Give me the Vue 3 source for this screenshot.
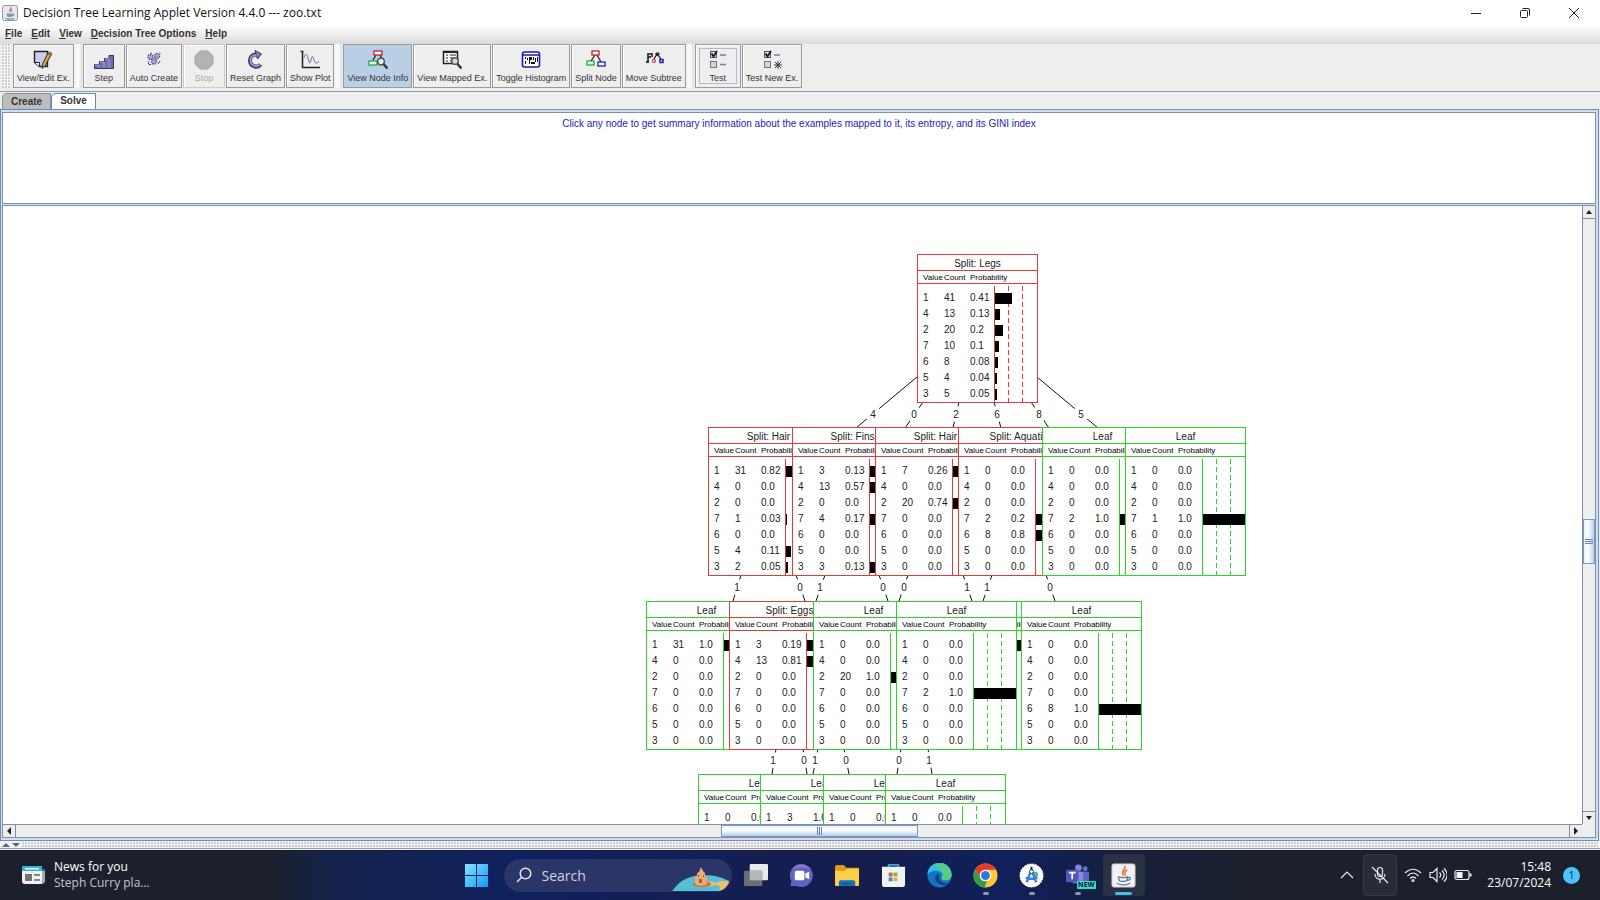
<script setup>
const menus = ['File', 'Edit', 'View', 'Decision Tree Options', 'Help']

const toolGroups = [
  [{ label: 'View/Edit Ex.', icon: 'edit' }],
  [
    { label: 'Step', icon: 'step' },
    { label: 'Auto Create', icon: 'gears' },
    { label: 'Stop', icon: 'stop', disabled: true },
    { label: 'Reset Graph', icon: 'reset' },
    { label: 'Show Plot', icon: 'plot' },
  ],
  [
    { label: 'View Node Info', icon: 'nodeinfo', active: true },
    { label: 'View Mapped Ex.', icon: 'mapped' },
    { label: 'Toggle Histogram', icon: 'histogram' },
    { label: 'Split Node', icon: 'split' },
    { label: 'Move Subtree', icon: 'move' },
  ],
  [
    { label: 'Test', icon: 'test', focused: true },
    { label: 'Test New Ex.', icon: 'testnew' },
  ],
]

const classes = [1, 4, 2, 7, 6, 5, 3]
const none = ['0', '0.0']

function node(x, y, title, filled) {
  return {
    x,
    y,
    title,
    leaf: title === 'Leaf',
    rows: classes.map((value) => {
      const [count, probability] = filled[value] || none
      return { value, count, probability, bar: Number(probability) * 100 }
    }),
  }
}

const nodes = [
  node(914, 48, 'Split: Legs', {
    1: ['41', '0.41'], 4: ['13', '0.13'], 2: ['20', '0.2'], 7: ['10', '0.1'],
    6: ['8', '0.08'], 5: ['4', '0.04'], 3: ['5', '0.05'],
  }),
  node(705, 221, 'Split: Hair', {
    1: ['31', '0.82'], 7: ['1', '0.03'], 5: ['4', '0.11'], 3: ['2', '0.05'],
  }),
  node(789, 221, 'Split: Fins', {
    1: ['3', '0.13'], 4: ['13', '0.57'], 7: ['4', '0.17'], 3: ['3', '0.13'],
  }),
  node(872, 221, 'Split: Hair', { 1: ['7', '0.26'], 2: ['20', '0.74'] }),
  node(955, 221, 'Split: Aquatic', { 7: ['2', '0.2'], 6: ['8', '0.8'] }),
  node(1039, 221, 'Leaf', { 7: ['2', '1.0'] }),
  node(1122, 221, 'Leaf', { 7: ['1', '1.0'] }),
  node(935, 395, 'Leaf', { 1: ['7', '1.0'] }),
  node(643, 395, 'Leaf', { 1: ['31', '1.0'] }),
  node(726, 395, 'Split: Eggs', { 1: ['3', '0.19'], 4: ['13', '0.81'] }),
  node(810, 395, 'Leaf', { 2: ['20', '1.0'] }),
  node(893, 395, 'Leaf', { 7: ['2', '1.0'] }),
  node(1018, 395, 'Leaf', { 6: ['8', '1.0'] }),
  node(695, 568, 'Leaf', { 4: ['13', '1.0'] }),
  node(757, 568, 'Leaf', { 1: ['3', '1.0'] }),
  node(820, 568, 'Leaf', {}),
  node(882, 568, 'Leaf', {}),
]

const edges = [
  [914, 171, 853, 222, 870, '4'],
  [920, 196, 902, 222, 911, '0'],
  [956, 196, 950, 222, 953, '2'],
  [991, 196, 998, 222, 994, '6'],
  [1028, 196, 1046, 222, 1036, '8'],
  [1034, 171, 1095, 222, 1078, '5'],
  [738, 369, 730, 395, 734, '1'],
  [793, 369, 802, 395, 797, '0'],
  [822, 369, 813, 395, 817, '1'],
  [876, 369, 885, 395, 880, '0'],
  [905, 369, 896, 395, 901, '0'],
  [960, 369, 969, 395, 964, '1'],
  [989, 369, 980, 395, 984, '1'],
  [1043, 369, 1052, 395, 1047, '0'],
  [773, 543, 769, 568, 770, '1'],
  [800, 543, 804, 568, 801, '0'],
  [815, 543, 810, 568, 812, '1'],
  [841, 543, 846, 568, 843, '0'],
  [898, 543, 894, 568, 896, '0'],
  [925, 543, 929, 568, 926, '1'],
].map(([x1, y1, x2, y2, lx, label]) => ({
  x1, y1, x2, y2, lx, label,
  ly: y2 - 14,
}))

const apps = [
  { name: 'Task view', icon: 'taskview' },
  { name: 'Chat', icon: 'chat' },
  { name: 'File Explorer', icon: 'explorer' },
  { name: 'Microsoft Store', icon: 'store' },
  { name: 'Edge', icon: 'edge' },
  { name: 'Chrome', icon: 'chrome', open: true },
  { name: 'Android Studio', icon: 'studio', open: true },
  { name: 'Teams', icon: 'teams', open: true },
  { name: 'Java', icon: 'java', current: true },
]
</script>

<template>
  <div class="desktop">
    <header class="titlebar">
      <svg class="java-mini" viewBox="0 0 16 16" aria-hidden="true">
        <rect x=".5" y=".5" width="15" height="15" rx="2" fill="#e3ebf1" stroke="#8b9aa8" />
        <path d="M8.500 2c2 1.600-2.500 2.500-.5 5M10 4c-1.500 1-.8 1.800-.5 3" fill="none" stroke="#d8803e" stroke-width="1.300" />
        <path d="M4.500 8.500h6c0 3-1 3.500-3 3.500s-3-.5-3-3.500z" fill="#7d9bb2" />
        <path d="M10.500 9c2-.3 2 1.700-.5 2M3.500 13.500c2 .8 7 .8 9 0" fill="none" stroke="#55788f" />
      </svg>
      <h1>Decision Tree Learning Applet Version 4.4.0 --- zoo.txt</h1>
      <div class="window-buttons">
        <button aria-label="Minimize"><svg viewBox="0 0 12 12"><path d="M1 6.500h10" /></svg></button>
        <button aria-label="Restore">
          <svg viewBox="0 0 12 12"><rect x="1.500" y="3.500" width="7" height="7" rx="1" /><path d="M3.500 1.500H9a1.500 1.500 0 0 1 1.500 1.500v5.500" /></svg>
        </button>
        <button aria-label="Close"><svg viewBox="0 0 12 12"><path d="M1 1l10 10M11 1L1 11" /></svg></button>
      </div>
    </header>

    <nav class="menubar">
      <button v-for="m in menus" :key="m"><u>{{ m[0] }}</u>{{ m.slice(1) }}</button>
    </nav>

    <div class="toolbar">
      <span class="grip"></span>
      <div v-for="(group, g) in toolGroups" :key="g" class="tool-group">
        <button
          v-for="t in group"
          :key="t.label"
          class="tool"
          :class="{ active: t.active, focused: t.focused }"
          :disabled="t.disabled"
        >
          <svg viewBox="0 0 20 20" aria-hidden="true">
            <g v-if="t.icon === 'edit'">
              <path d="M1.500 1.500h13v15h-8l-5-4z" fill="#c9cdf0" stroke="#222" stroke-width="1.400" />
              <path d="M1.500 12.500h5v4" fill="#fff" stroke="#222" />
              <path d="M15 3l3 2-6 11-3 2.500.5-4.500z" fill="#d8a450" stroke="#3a2b18" />
              <path d="M15 3.500l3 2 1-2-2.500-1.700z" fill="#d07b70" stroke="#3a2b18" stroke-width=".6" />
            </g>
            <g v-else-if="t.icon === 'step'">
              <path d="M.5 18.500v-4h5v-3h5v-3h4.500v-3h4.500v13z" fill="#7070b0" stroke="#34345c" />
              <path d="M1 15h4v3M6 12h4v6M11 9h4v9" fill="none" stroke="#a4a4d8" />
            </g>
            <g v-else-if="t.icon === 'gears'" fill="#a8a8e4" stroke="#42426c">
              <circle cx="6.500" cy="7" r="2.500" stroke-dasharray="1.200 1" stroke-width="1.500" />
              <circle cx="13" cy="6" r="2.500" stroke-dasharray="1.200 1" stroke-width="1.500" />
              <circle cx="10" cy="11.500" r="2.500" stroke-dasharray="1.200 1" stroke-width="1.500" />
              <path d="M4 11.500l1 3h2M14 14l2-3M8 3L6 4M15.500 2.500l1 1" fill="none" />
            </g>
            <path v-else-if="t.icon === 'stop'" d="M6 1h8l5 5v8l-5 5H6l-5-5V6z" fill="#b2b2b2" stroke="#a4a4a4" />
            <g v-else-if="t.icon === 'reset'" fill="none">
              <path d="M15.500 14.500c-1.500 2-3.500 2.500-5.500 2-3-.8-5-3-5-6s2-6 6-6" stroke="#34345c" stroke-width="4" />
              <path d="M10 .5l6.500 3.500L12.500 9z" fill="#8080c0" stroke="#34345c" />
              <path d="M15 14.500c-1.500 1.500-3 2-5 1.500-2.700-.7-4.500-2.700-4.500-5.500 0-3 2-5.500 6-5.500" stroke="#9898d0" stroke-width="2" />
            </g>
            <g v-else-if="t.icon === 'plot'" fill="none">
              <path d="M2.500 1v16.500H20M.5 1.500h3" stroke="#222" stroke-width="1.500" />
              <path d="M4 8c1-5 3-5 4 0s2 7 3 2 2-4 3 0 2 4 5 1" stroke="#6868a0" />
            </g>
            <g v-else-if="t.icon === 'nodeinfo'" fill="none" stroke-width="1.300">
              <path d="M8 5L5 10M12 5l2 4" stroke="#222" />
              <rect x="6" y="1" width="8" height="4" fill="#fff" stroke="#c02030" />
              <rect x="1" y="11" width="8" height="4" fill="#fff" stroke="#18b030" />
              <circle cx="13" cy="11.500" r="3.300" fill="#e5e8ef" stroke="#444" />
              <path d="M15.500 14l4 4.500" stroke="#3c3428" stroke-width="2.500" />
            </g>
            <g v-else-if="t.icon === 'mapped'" fill="none" stroke="#222" stroke-width="1.500">
              <rect x="1.500" y="1.500" width="14" height="12" fill="#fff" />
              <path d="M1 2h15" stroke-width="2" />
              <path d="M4 5h2M8 5h6M4 8h2M8 8h4M4 11h2M8 11h2" stroke-width="1.200" />
              <circle cx="13" cy="11" r="3.300" fill="#d9d9e0" stroke="#555" />
              <path d="M15.500 14l4 4.500" stroke="#3c3428" stroke-width="2.500" />
            </g>
            <g v-else-if="t.icon === 'histogram'">
              <rect x="1.500" y="2" width="17" height="15" rx="2" fill="#fff" stroke="#1a1ab0" stroke-width="1.600" />
              <path d="M2 5h16" stroke="#1a1ab0" stroke-width="1.500" />
              <path d="M4 7h1v2H4zM4 11h1v3H4zM6 8h1v2H6zM8 7v7h1V7zM9 7h2v3H9zM12 7h1v3h-1zM10 12h4v2h-4zM14 8h1v4h-1zM16 7h1v5h-1z" fill="#111" />
            </g>
            <g v-else-if="t.icon === 'split'" fill="#fff" stroke-width="1.300">
              <path d="M9 5l-4 6M11 5l4 7" stroke="#222" />
              <rect x="6" y="1" width="7" height="4" stroke="#c02030" />
              <rect x="1" y="11" width="7" height="4" stroke="#18b030" />
              <rect x="12" y="12" width="7" height="4" stroke="#2020b0" />
            </g>
            <g v-else-if="t.icon === 'move'" fill="none" stroke="#111" stroke-width="1.500">
              <path d="M4 3v9M2 12h3M5 4h2M4 7h3M8 3v4" />
              <path d="M10 9l3-5 4 5" stroke-width="1.200" />
              <path d="M12 3h3v2h-3z" stroke-width="1" />
              <circle cx="10" cy="11" r="1.500" stroke="#e03030" stroke-width="1.200" />
              <path d="M16 9.500h3v3h-3z" stroke="#2020b0" />
            </g>
            <g v-else fill="none">
              <rect x="2.500" y="1.500" width="6" height="6" fill="#ddd" stroke="#555" />
              <path d="M3.500 3.500l2 3L9 1" stroke="#111" stroke-width="1.700" />
              <rect x="2.500" y="11.500" width="6" height="6" fill="#d5d5d5" stroke="#777" />
              <path d="M12 5h6" stroke="#7777a8" stroke-width="1.500" />
              <path v-if="t.icon === 'test'" d="M12 14.500h6" stroke="#7777a8" stroke-width="1.500" />
              <path v-else d="M16 11v8M12 15h8M13 12l6 6M19 12l-6 6" stroke="#333" />
            </g>
          </svg>
          <span>{{ t.label }}</span>
        </button>
      </div>
    </div>

    <div class="tabs" role="tablist">
      <button class="tab" role="tab" aria-selected="false">Create</button>
      <button class="tab selected" role="tab" aria-selected="true">Solve</button>
    </div>

    <main class="content">
      <p class="info">Click any node to get summary information about the examples mapped to it, its entropy, and its GINI index</p>

      <section class="view">
        <div class="canvas">
          <svg class="edges" aria-hidden="true">
            <g v-for="(e, i) in edges" :key="i">
              <line :x1="e.x1" :y1="e.y1" :x2="e.x2" :y2="e.y2" />
              <circle :cx="e.lx" :cy="e.ly" r="8" />
              <text :x="e.lx" :y="e.ly + 4">{{ e.label }}</text>
            </g>
          </svg>
          <article
            v-for="(n, i) in nodes"
            :key="i"
            class="node"
            :class="{ leaf: n.leaf }"
            :style="{ left: n.x + 'px', top: n.y + 'px' }"
          >
            <h2>{{ n.title }}</h2>
            <div class="scale"></div>
            <table>
              <thead>
                <tr><th class="c-value">Value</th><th class="c-count">Count</th><th class="c-prob">Probability</th><th></th></tr>
              </thead>
              <tbody>
                <tr v-for="r in n.rows" :key="r.value">
                  <td>{{ r.value }}</td>
                  <td>{{ r.count }}</td>
                  <td>{{ r.probability }}</td>
                  <td class="c-bar"><div class="bar" :style="{ width: r.bar + '%' }"></div></td>
                </tr>
              </tbody>
            </table>
          </article>
        </div>

        <div class="scroll vertical">
          <button aria-label="Scroll up"><svg viewBox="0 0 8 8"><path d="M4 2l3 4H1z" /></svg></button>
          <span class="before"></span><span class="thumb"></span><span class="after"></span>
          <button aria-label="Scroll down"><svg viewBox="0 0 8 8"><path d="M4 6l3-4H1z" /></svg></button>
        </div>
        <div class="scroll horizontal">
          <button aria-label="Scroll left"><svg viewBox="0 0 8 8"><path d="M2 4l4-4v8z" /></svg></button>
          <span class="before"></span><span class="thumb"></span><span class="after"></span>
          <button aria-label="Scroll right"><svg viewBox="0 0 8 8"><path d="M6 4L2 0v8z" /></svg></button>
        </div>
      </section>
    </main>

    <div class="divider">
      <svg viewBox="0 0 20 6" aria-hidden="true"><path d="M0 5l4-4 4 4zM10 1h8l-4 4z" fill="#4d6790" /></svg>
      <span class="dots"></span>
    </div>

    <footer class="taskbar">
      <button class="news">
        <svg viewBox="0 0 24 20" aria-hidden="true">
          <path d="M3 1h16v3h4v12a3 3 0 0 1-3 3H3z" fill="#1583b5" />
          <path d="M19 6h4v10a3 3 0 0 1-4 2z" fill="#aaa" />
          <path d="M0 3a2 2 0 0 1 2-2h16a2 2 0 0 1 2 2v16H3a3 3 0 0 1-3-3z" fill="#f2f2f0" />
          <path d="M0 6V3a2 2 0 0 1 2-2h16a2 2 0 0 1 2 2v3z" fill="#35b2d6" />
          <path d="M3 3h14v1.500H3z" fill="#e8fbff" />
          <path d="M3 9h7v7H3z" fill="#747470" /><path d="M12 9h6v2h-6zM12 14h6v2h-6z" fill="#858580" />
        </svg>
        <span class="news-text"><span>News for you</span><span class="sub">Steph Curry pla...</span></span>
      </button>

      <div class="dock">
        <button class="app" aria-label="Start">
          <svg viewBox="0 0 26 26">
            <defs><linearGradient id="win" x1="0" y1="0" x2="1" y2="1"><stop offset="0" stop-color="#8be2ff" /><stop offset="1" stop-color="#0a9af5" /></linearGradient></defs>
            <path d="M1 1h11.500v11.500H1zM13.500 1H25v11.500H13.500zM1 13.500h11.500V25H1zM13.500 13.500H25V25H13.500z" fill="url(#win)" />
          </svg>
        </button>
        <div class="search">
          <svg class="lens" viewBox="0 0 16 16" aria-hidden="true"><circle cx="9.500" cy="6.500" r="5.300" /><path d="M5.700 10.300L1 15" /></svg>
          <input type="search" aria-label="Search" placeholder="Search" />
          <svg class="beach" viewBox="0 0 58 26" aria-hidden="true">
            <path d="M0 25C8 14 18 9 32 9c11 0 19 3 25 6l-2 5c-2 3-6 5-10 5z" fill="#55bfd6" />
            <path d="M22 18c7-3 16-3 22-1 3-2 7-2 12-2l1 2c-3 4-6 7-11 8 4-4 2-6-3-6-6 2-15 3-21-1z" fill="#f0c06c" />
            <ellipse cx="30" cy="18" rx="9" ry="3" fill="#d9643c" />
            <path d="M23 18V11l2-1V7l2-1 2-5 2 4 2 2v3l2 1v7c-3 2-9 2-12 0z" fill="#e8ad75" />
            <path d="M27 17v-4h3v4zM26 9h1v2h-1zM31 9h1v2h-1z" fill="#a75e35" />
          </svg>
        </div>
        <button v-for="a in apps" :key="a.name" class="app" :class="{ open: a.open, current: a.current }" :aria-label="a.name">
          <svg viewBox="0 0 26 26">
            <g v-if="a.icon === 'taskview'">
              <rect x="7" y="1" width="19" height="17" rx="1" fill="#e8e9ec" />
              <rect x="1" y="8" width="19" height="16" rx="1" fill="#6b6d72" />
              <rect x="7" y="8" width="13" height="10" fill="#b5b7ba" />
            </g>
            <g v-else-if="a.icon === 'chat'">
              <path d="M13 1a12 12 0 1 1-5 23H1.500l1-5A12 12 0 0 1 13 1z" fill="#6264c4" />
              <path d="M3 7a12 12 0 0 1 20 0c-6-3-14-3-20 0z" fill="#8e78c8" />
              <rect x="6" y="8" width="10" height="10" rx="2" fill="#fff" /><path d="M17 11l4-2v8l-4-2z" fill="#fff" />
            </g>
            <g v-else-if="a.icon === 'explorer'">
              <path d="M0 4a2 2 0 0 1 2-2h7l3 3h12a1 1 0 0 1 1 1v8H0z" fill="#e0981c" />
              <path d="M0 8h10l3-2h12v17a1 1 0 0 1-1 1H1a1 1 0 0 1-1-1z" fill="#fccf48" />
              <path d="M4 24v-4a2 2 0 0 1 2-2h13a2 2 0 0 1 2 2v4z" fill="#1371b8" /><path d="M8 21h9v1H8z" fill="#0c5088" />
            </g>
            <g v-else-if="a.icon === 'store'">
              <path d="M8 5V2h10v3" fill="none" stroke="#35a7dc" stroke-width="1.800" />
              <path d="M1 4h24v18a3 3 0 0 1-3 3H4a3 3 0 0 1-3-3z" fill="#f1f2f3" />
              <path d="M8 10h4v4H8z" fill="#e8552e" /><path d="M13 10h4v4h-4z" fill="#7fb43c" />
              <path d="M8 15h4v4H8z" fill="#2a94dc" /><path d="M13 15h4v4h-4z" fill="#efb52a" />
            </g>
            <g v-else-if="a.icon === 'edge'">
              <circle cx="13" cy="13" r="12.500" fill="#1274c4" />
              <path d="M.5 12A12.500 12.500 0 0 1 25.500 12c.5 4-3 6-6 6-3 0-5-1.500-4-3 2-3-1-7-6-7-4 0-7 1.500-9 4z" fill="#33bfe0" />
              <path d="M13 .5a12.500 12.500 0 0 1 12.500 12c0 4-3 5.500-6 5.500-3 0-5-1.500-4-3 3-5-1-12-9-12 2-1.500 4-2.500 6.500-2.500z" fill="#55ce82" />
              <path d="M9.500 12c-3 5 1 11 8 11 2 0 4-1 5-2-6 1-11-2-10-8 0-2-2-2-3-1z" fill="#10407f" />
            </g>
            <g v-else-if="a.icon === 'chrome'">
              <circle cx="13" cy="13" r="12.500" fill="#fcc834" />
              <path d="M2.200 6.700A12.500 12.500 0 0 1 24 7H13a6 6 0 0 0-5.300 9z" fill="#e23c30" />
              <path d="M2.200 6.700L7.700 16a6 6 0 0 0 7 2.700L12 25.500A12.500 12.500 0 0 1 2.200 6.700z" fill="#2d9d50" />
              <circle cx="13" cy="13" r="6" fill="#fff" /><circle cx="13" cy="13" r="4.600" fill="#3273dc" />
            </g>
            <g v-else-if="a.icon === 'studio'">
              <circle cx="13" cy="13" r="12" fill="#fff" stroke="#fff" stroke-dasharray="2 1" />
              <circle cx="17" cy="12" r="3" fill="#48c57c" />
              <path d="M8 20l5-13 5 13M7 15c3 2 9 2 12 0" fill="none" stroke="#3b80e2" stroke-width="2.600" />
              <path d="M13 4v3" stroke="#234" stroke-width="2" /><circle cx="13" cy="9" r="2" fill="#fff" stroke="#234" />
            </g>
            <g v-else-if="a.icon === 'teams'">
              <circle cx="14" cy="5" r="3.500" fill="#7f84dc" /><circle cx="21" cy="6" r="2.500" fill="#656bc8" />
              <path d="M8 9h12v12H8z" fill="#8589e0" /><path d="M19 9h6v11h-6z" fill="#5b62c0" />
              <rect x="1" y="7" width="13" height="13" rx="1" fill="#5057b8" />
              <path d="M4 10h7M7.500 10v7" stroke="#fff" stroke-width="1.800" />
            </g>
            <g v-else>
              <rect x="1" y="1" width="24" height="24" rx="2" fill="#f0f1f2" stroke="#c9cdd2" />
              <path d="M14 3c3 3-5 5-1 10M17 7c-4 2-3 3-2 6" fill="none" stroke="#e07830" stroke-width="1.600" />
              <path d="M7 14.500c4 1 8 1 11-.3M8 15c0 5 2 4 5 4s4 0 4-4M17.500 15c4-1 3 3-1 3M6 21c4 2 10 2 14 0" fill="none" stroke="#557c98" stroke-width="1.300" />
            </g>
          </svg>
          <span v-if="a.icon === 'teams'" class="new">NEW</span>
        </button>
      </div>

      <div class="tray">
        <button class="tray-icon chevron" aria-label="Show hidden icons"><svg viewBox="0 0 18 18"><path d="M3 12l6-6 6 6" /></svg></button>
        <button class="tray-icon boxed" aria-label="Microphone muted">
          <svg viewBox="0 0 18 18"><rect x="6.500" y="1.500" width="5" height="9" rx="2.500" /><path d="M4 8c0 7 10 7 10 0M9 13v4M1 1l16 16" /></svg>
        </button>
        <button class="tray-icon" aria-label="Wi-Fi">
          <svg viewBox="0 0 18 18"><path d="M1 7c5-5 11-5 16 0M3.500 10c3.500-4 7.500-4 11 0M6 12.500c2-2 4-2 6 0" /><circle cx="9" cy="14.500" r="1" /></svg>
        </button>
        <button class="tray-icon" aria-label="Volume">
          <svg viewBox="0 0 18 18"><path d="M1 6.500h3l4-4v13l-4-4H1zM10.500 6.500c1.500 1.500 1.500 3.500 0 5M13 4.500c3 3 3 6 0 9M15 2.500c4 4 4 9 0 13" /></svg>
        </button>
        <button class="tray-icon" aria-label="Battery">
          <svg viewBox="0 0 18 18"><rect x="1" y="4.500" width="14" height="9" rx="2" /><path d="M3 6.500h5v5H3z" fill="#fff" /><path d="M16.500 7.500v3" stroke-width="2" /></svg>
        </button>
        <button class="clock"><span>15:48</span><span>23/07/2024</span></button>
        <span class="badge">1</span>
      </div>
    </footer>
  </div>
</template>

<style>
html,
body {
  height: 100%;
  overflow: hidden;
}
</style>

<style scoped>
.desktop {
  display: flex;
  flex-direction: column;
  height: 100vh;
  background: #eee;
  font-family: "Liberation Sans", sans-serif;
  color: #333;
}
.desktop * {
  box-sizing: border-box;
}
button {
  border: 0;
  padding: 0;
  margin: 0;
  background: none;
  font: inherit;
  color: inherit;
}
h1,
h2,
p {
  margin: 0;
  font-weight: 400;
}

.titlebar {
  display: flex;
  align-items: center;
  height: 25px;
  padding-left: 2px;
  background: #fff;
}
.java-mini {
  width: 16px;
  height: 16px;
}
.titlebar h1 {
  margin-left: 5px;
  font: 12px "Open Sans", sans-serif;
  color: #111;
}
.window-buttons {
  display: flex;
  margin-left: auto;
  gap: 2px;
}
.window-buttons button {
  display: grid;
  place-items: center;
  width: 47px;
  height: 24px;
}
.window-buttons svg {
  width: 12px;
  height: 12px;
  fill: none;
  stroke: #222;
}
.window-buttons button:last-child {
  margin-right: 3px;
}

.menubar {
  display: flex;
  gap: 9px;
  height: 19px;
  padding-left: 5px;
  background: linear-gradient(#fff, #dadada);
  font-size: 10px;
  font-weight: 700;
}
.menubar button {
  height: 17px;
}

.toolbar {
  display: flex;
  height: 48px;
  padding: 0 0 3px 2px;
  border-bottom: 1px solid #8a99ab;
}
.grip {
  width: 9px;
  margin-right: 2px;
  background: radial-gradient(circle at 1px 1px, #ccc 1px, transparent 1px) 0 0 / 3px 3px #fbfbfb;
}
.tool-group {
  display: flex;
  gap: 1px;
}
.tool-group + .tool-group::before {
  content: "";
  width: 8px;
  background: linear-gradient(90deg, #eee, #fff 50%, #dcdcdc);
}
.tool {
  display: flex;
  flex-direction: column;
  align-items: center;
  justify-content: space-between;
  min-width: 42px;
  height: 44px;
  padding: 5px 3px 3px;
  border: 1px solid #9a9a9a;
  box-shadow: inset 1px 1px #fff;
  font-size: 9px;
  line-height: 11px;
  white-space: nowrap;
}
.tool svg {
  width: 20px;
  height: 20px;
}
.tool.active {
  background: #b8cfe5;
  box-shadow: none;
}
.tool.focused {
  min-width: 46px;
  outline: 1px solid #a9bfd2;
  outline-offset: -5px;
}
.tool:disabled {
  color: #aaa;
  border-color: #ccc;
}

.tabs {
  display: flex;
  align-items: flex-end;
  height: 17px;
  padding-left: 2px;
}
.tab {
  height: 16px;
  padding: 0 8px 1px;
  border: 1px solid #8393a8;
  border-bottom: 0;
  border-top-left-radius: 5px;
  background: #bdbdbd;
  font-size: 10px;
  font-weight: 700;
}
.tab.selected {
  height: 17px;
  margin-bottom: -1px;
  padding-bottom: 3px;
  border-color: #6382bf;
  background: #fff;
}

.content {
  display: flex;
  flex-direction: column;
  flex: 1;
  min-height: 0;
  margin-right: 1px;
  padding: 2px 2px 2px 1px;
  border: 1px solid #6f8db4;
  background: #cfe0f2;
}
.info {
  height: 92px;
  margin-bottom: 1px;
  padding-top: 4px;
  border: 1px solid #7d90a6;
  background: #fff;
  color: #2222b8;
  font-size: 10px;
  line-height: 14px;
  text-align: center;
}
.view {
  display: grid;
  grid-template-columns: 1fr 13px;
  grid-template-rows: 1fr 13px;
  flex: 1;
  min-height: 0;
  border: 1px solid #7d90a6;
  background: #eee;
}
.canvas {
  position: relative;
  overflow: hidden;
  background: #fff;
}
.edges {
  position: absolute;
  inset: 0;
  width: 100%;
  height: 100%;
}
.edges line {
  stroke: #111;
}
.edges circle {
  fill: #fff;
}
.edges text {
  fill: #222;
  font-size: 10px;
  text-anchor: middle;
}

.node {
  --edge: #e03a3a;
  position: absolute;
  width: 121px;
  border: 1px solid var(--edge);
  background: #fff;
  color: #222;
}
.node.leaf {
  --edge: #2cd52c;
}
.node h2 {
  height: 16px;
  border-bottom: 1px solid var(--edge);
  font-size: 10px;
  line-height: 18px;
  text-align: center;
}
.node table {
  position: relative;
  width: 100%;
  table-layout: fixed;
  border-collapse: separate;
  border-spacing: 0;
}
.node th,
.node td {
  padding: 0;
  text-align: left;
  white-space: nowrap;
}
.node th {
  height: 13px;
  padding-top: 2px;
  border-bottom: 1px solid var(--edge);
  font-size: 8px;
  font-weight: 400;
  line-height: 10px;
  color: #000;
}
.node tbody::before {
  content: "";
  display: block;
  height: 6px;
}
.node td {
  height: 16px;
  font-size: 10px;
  line-height: 16px;
}
.node th:first-child,
.node td:first-child {
  padding-left: 5px;
}
.c-value {
  width: 26px;
}
.c-count {
  width: 26px;
}
.c-prob {
  width: 25px;
}
.bar {
  height: 11px;
  background: #000;
}
.scale {
  position: absolute;
  top: 31px;
  right: 0;
  bottom: 0;
  width: 43px;
  border-left: 1px solid var(--edge);
  background:
    repeating-linear-gradient(transparent 0 5px, #fff 5px 8px),
    linear-gradient(90deg, transparent 13px, var(--edge) 13px 14px, transparent 14px 27px, var(--edge) 27px 28px, transparent 28px);
}

.scroll {
  display: flex;
  background: #eee;
}
.scroll.vertical {
  flex-direction: column;
  border-left: 1px solid #7d90a6;
}
.scroll.horizontal {
  border-top: 1px solid #7d90a6;
}
.scroll button {
  display: grid;
  place-items: center;
  flex: 0 0 13px;
}
.scroll button svg {
  width: 8px;
  height: 8px;
  fill: #222;
}
.vertical button:first-child {
  border-bottom: 1px solid #7d90a6;
}
.vertical button:last-child {
  border-top: 1px solid #7d90a6;
}
.horizontal button:first-child {
  border-right: 1px solid #7d90a6;
}
.horizontal button:last-child {
  border-left: 1px solid #7d90a6;
}
.thumb {
  display: grid;
  place-items: center;
  border: 1px solid #7c96be;
}
.thumb::after {
  content: "";
}
.horizontal .thumb {
  flex: 195;
  background: linear-gradient(#e9f2fb, #fff 40%, #b8cfe5);
}
.horizontal .thumb::after {
  width: 5px;
  height: 8px;
  background: repeating-linear-gradient(90deg, #6382bf 0 1px, transparent 1px 2px);
}
.horizontal .before {
  flex: 706;
}
.horizontal .after {
  flex: 652;
}
.vertical .thumb {
  flex: 43;
  background: linear-gradient(90deg, #e9f2fb, #fff 40%, #b8cfe5);
}
.vertical .thumb::after {
  width: 8px;
  height: 5px;
  background: repeating-linear-gradient(#6382bf 0 1px, transparent 1px 2px);
}
.vertical .before {
  flex: 301;
}
.vertical .after {
  flex: 247;
}

.divider {
  display: flex;
  align-items: center;
  height: 9px;
  padding: 0 2px 2px;
  background: linear-gradient(#f4f4f4 7px, #8d9bab 7px 8px, #eee 8px);
}
.divider svg {
  width: 20px;
  height: 6px;
}
.dots {
  flex: 1;
  height: 6px;
  background: radial-gradient(circle at 1px 1px, #ccc 1px, transparent 1px) 0 0 / 3px 3px;
}

.taskbar {
  display: grid;
  grid-template-columns: 1fr auto 1fr;
  align-items: center;
  height: 50px;
  background: linear-gradient(90deg, #1b202c 0 17%, #14224c 21%, #10205c 32%, #161d4c 54%, #10205c 63%, #171f3c 70%, #1b202c 78%);
  font-family: "Open Sans", sans-serif;
  color: #fff;
}
.news {
  display: flex;
  align-items: center;
  gap: 8px;
  padding-left: 22px;
  text-align: left;
  font-size: 12px;
  line-height: 16px;
}
.news svg {
  width: 24px;
  height: 20px;
}
.news-text {
  display: grid;
}
.sub {
  color: #c4c7cc;
}
.dock {
  display: flex;
  align-items: center;
}
.app {
  position: relative;
  display: grid;
  place-items: center;
  width: 42px;
  height: 42px;
  margin: 0 2px;
  border-radius: 4px;
}
.app svg {
  width: 25px;
  height: 25px;
}
.app.open::after,
.app.current::after {
  content: "";
  position: absolute;
  bottom: 1px;
  width: 6px;
  height: 3px;
  border-radius: 2px;
  background: #9295a5;
}
.app.current {
  background: #2b3145;
}
.app.current::after {
  width: 17px;
  background: #4cb8f0;
}
.new {
  position: absolute;
  right: 3px;
  bottom: 7px;
  padding: 0 1px;
  border-radius: 1px;
  background: #35dcdc;
  color: #111;
  font-size: 7px;
  font-weight: 700;
  line-height: 8px;
}
.search {
  display: flex;
  align-items: center;
  width: 228px;
  height: 33px;
  margin: 0 1px 0 4px;
  padding: 0 2px 0 12px;
  border-radius: 17px;
  background: #2a3568;
  overflow: hidden;
}
.lens {
  width: 16px;
  height: 16px;
  fill: none;
  stroke: #e6e8ef;
  stroke-width: 1.500;
}
.search input {
  flex: 1;
  min-width: 0;
  padding: 0 0 0 10px;
  border: 0;
  background: none;
  font: 14px "Open Sans", sans-serif;
  color: #fff;
}
.search input::placeholder {
  color: #d0d3e0;
  opacity: 1;
}
.beach {
  align-self: flex-end;
  width: 58px;
  height: 26px;
}
.tray {
  display: flex;
  align-items: center;
  justify-content: flex-end;
  padding-right: 20px;
}
.tray-icon {
  display: grid;
  place-items: center;
  width: 25px;
  height: 42px;
}
.tray-icon svg {
  width: 18px;
  height: 18px;
  fill: none;
  stroke: #e8eaee;
  stroke-width: 1.200;
}
.tray-icon.chevron {
  margin-right: 4px;
}
.tray-icon.boxed {
  width: 34px;
  margin-right: 3px;
  border: 1px solid #343945;
  border-radius: 4px;
  background: #272c37;
}
.clock {
  display: grid;
  margin: 0 12px;
  font-size: 12px;
  line-height: 16px;
  text-align: right;
}
.badge {
  width: 17px;
  height: 17px;
  border-radius: 50%;
  background: #4cc2ff;
  color: #142030;
  font-size: 10px;
  line-height: 17px;
  text-align: center;
}
</style>
